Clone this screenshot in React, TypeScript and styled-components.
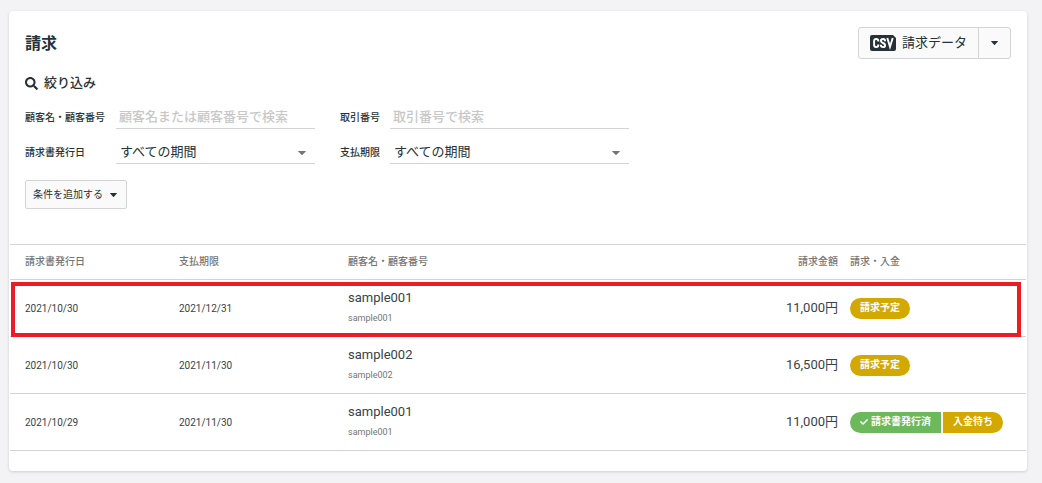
import React from "react";
import styled, { createGlobalStyle, css } from "styled-components";
import { FaSearch, FaCheck } from "react-icons/fa";

const line = "#d3d5d5";
const ink = "#263238";

const GlobalStyle = createGlobalStyle`
  *, *::before, *::after { box-sizing: border-box; }
  body {
    margin: 0;
    background: #f3f3f5;
    color: ${ink};
    font-family: Roboto, "Noto Sans CJK JP", sans-serif;
    font-size: 13px;
    line-height: 20px;
  }
  button, input, select { font: inherit; color: inherit; }
`;

const Page = styled.div`
  padding: 11px 15px 12px 9px;
`;

const Card = styled.main`
  padding: 0 1px 20px;
  background: #fff;
  border-radius: 4px;
  box-shadow: 0 1px 3px rgba(0, 0, 0, 0.16);
`;

const Header = styled.header`
  display: flex;
  align-items: center;
  justify-content: space-between;
  padding: 16px 15px 0;
`;

const Title = styled.h1`
  margin: 0;
  padding-top: 2px;
  font-size: 16px;
  line-height: 24px;
  font-weight: 700;
`;

const ButtonGroup = styled.div`
  display: flex;
  height: 32px;
  border: 1px solid ${line};
  border-radius: 3px;
  background: #fafafa;
`;

const GroupButton = styled.button<{ $split?: boolean }>`
  display: flex;
  align-items: center;
  justify-content: center;
  gap: 6px;
  padding: 0 ${(p) => (p.$split ? 12 : 11)}px;
  border: 0;
  border-left: ${(p) => (p.$split ? `1px solid ${line}` : "0")};
  background: transparent;
`;

const CsvMark = styled.svg`
  display: block;
  width: 26px;
  height: 16px;
`;

const CaretSvg = styled.svg<{ $muted?: boolean }>`
  display: block;
  width: ${(p) => (p.$muted ? 8 : 7)}px;
  height: 4px;
  fill: ${(p) => (p.$muted ? "#757575" : ink)};
`;

const Caret = ({ muted, className }: { muted?: boolean; className?: string }) => (
  <CaretSvg className={className} $muted={muted} viewBox="0 0 8 4" preserveAspectRatio="none" aria-hidden="true">
    <path d="M0.5 0H7.5Q8.2 0 7.8 0.5L4.5 3.7Q4 4.1 3.5 3.7L0.2 0.5Q-0.2 0 0.5 0Z" />
  </CaretSvg>
);

const Filters = styled.section`
  padding: 14px 15px 35px;
`;

const FilterTitle = styled.h2`
  display: flex;
  align-items: center;
  gap: 6px;
  margin: 0 0 12px;
  font-size: 13px;
  line-height: 20px;
  font-weight: 500;
`;

const FilterGrid = styled.div`
  display: grid;
  grid-template-columns: minmax(0, 290px) minmax(0, 289px);
  gap: 11px 25px;
  margin-bottom: 16px;
`;

const FilterPair = styled.div<{ $narrow?: boolean }>`
  display: grid;
  grid-template-columns: ${(p) => (p.$narrow ? 50 : 91)}px minmax(0, 1fr);
  align-items: center;
  height: 24px;
`;

const Label = styled.label`
  padding-top: 2px;
  font-size: 10px;
  line-height: 16px;
  font-weight: 500;
  white-space: nowrap;
`;

const control = css`
  width: 100%;
  height: 24px;
  margin: 0;
  padding: 0 4px;
  border: 0;
  border-bottom: 1px solid ${line};
  border-radius: 0;
  background: transparent;
  outline: none;
`;

const TextInput = styled.input`
  ${control}
  padding: 0 3px;
  &::placeholder { color: #c8c8c8; opacity: 1; font-weight: 500; }
`;

const SelectBox = styled.div`
  position: relative;
`;

const Select = styled.select`
  ${control}
  display: block;
  appearance: none;
`;

const SelectCaret = styled(Caret)`
  position: absolute;
  right: 9px;
  top: 11px;
  pointer-events: none;
`;

const AddButton = styled.button`
  display: flex;
  align-items: center;
  gap: 7px;
  height: 29px;
  padding: 0 9px 0 7px;
  border: 1px solid ${line};
  border-radius: 2px;
  background: #fafafa;
  font-size: 10px;
`;

const Table = styled.table`
  width: 100%;
  border-collapse: separate;
  border-spacing: 0;
  border-top: 1px solid ${line};
  table-layout: fixed;
`;

const DateCol = styled.col`
  width: 163px;
`;
const DueCol = styled.col`
  width: 169px;
`;
const AmountCol = styled.col`
  width: 130px;
`;
const StatusCol = styled.col`
  width: 182px;
`;

const cell = css<{ $right?: boolean }>`
  padding: 0 6px;
  border-bottom: 1px solid ${line};
  text-align: ${(p) => (p.$right ? "right" : "left")};
  &:first-child { padding-left: 15px; }
`;

const Th = styled.th<{ $right?: boolean }>`
  ${cell}
  height: 35px;
  color: #757575;
  font-size: 10px;
  font-weight: 500;
`;

const Td = styled.td<{ $right?: boolean; $small?: boolean }>`
  ${cell}
  height: 57px;
  padding-top: ${(p) => (p.$small ? 2 : 0)}px;
  color: #37424a;
  font-size: ${(p) => (p.$small ? 10 : 13)}px;
`;

const Row = styled.tr`
  position: relative;
`;

const RowMark = styled.span`
  position: absolute;
  inset: 2px 5px 0 1px;
  border: 4px solid #ed1c24;
  pointer-events: none;
`;

const Customer = styled.div`
  line-height: 20px;
`;

const CustomerCode = styled.div`
  color: #757575;
  font-size: 9px;
  line-height: 20px;
`;

const Badges = styled.div`
  display: flex;
  gap: 2px;
`;

const Badge = styled.span<{ $done?: boolean }>`
  display: flex;
  align-items: center;
  gap: 3px;
  height: 21px;
  padding: 0 10px;
  background: ${(p) => (p.$done ? "#6bb95b" : "#d3a900")};
  color: #fff;
  font-size: 10px;
  font-weight: 700;
  white-space: nowrap;

  &:first-child {
    border-top-left-radius: 11px;
    border-bottom-left-radius: 11px;
  }
  &:last-child {
    border-top-right-radius: 11px;
    border-bottom-right-radius: 11px;
  }
`;

interface Status {
  text: string;
  done?: boolean;
}

interface Bill {
  issued: string;
  due: string;
  customer: string;
  amount: string;
  status: Status[];
  marked?: boolean;
}

const bills: Bill[] = [
  { issued: "2021/10/30", due: "2021/12/31", customer: "sample001", amount: "11,000円", status: [{ text: "請求予定" }], marked: true },
  { issued: "2021/10/30", due: "2021/11/30", customer: "sample002", amount: "16,500円", status: [{ text: "請求予定" }] },
  {
    issued: "2021/10/29",
    due: "2021/11/30",
    customer: "sample001",
    amount: "11,000円",
    status: [{ text: "請求書発行済", done: true }, { text: "入金待ち" }],
  },
];

const PeriodSelect = ({ id }: { id: string }) => (
  <SelectBox>
    <Select id={id}>
      <option>すべての期間</option>
    </Select>
    <SelectCaret muted />
  </SelectBox>
);

export default function App() {
  return (
    <Page lang="ja">
      <GlobalStyle />
      <Card>
        <Header>
          <Title>請求</Title>
          <ButtonGroup>
            <GroupButton type="button">
              <CsvMark viewBox="0 0 26 16" aria-hidden="true">
                <path d="M2 0H23L26 3V14Q26 16 24 16H2Q0 16 0 14V2Q0 0 2 0Z" fill={ink} />
                <g fill="none" stroke="#fff" strokeWidth="1.9">
                  <path d="M8.3 6.5V6Q8.3 4 6.2 4T4.1 6V10.1Q4.1 12.1 6.2 12.1T8.3 10.1V9.6" />
                  <path d="M15.1 6.2Q15.1 4 13 4T10.9 5.8C10.9 8.5 15.1 7.5 15.1 10.2Q15.1 12.1 13 12.1T10.8 9.8" />
                  <path d="M17.3 3L20 11.8L22.7 3" />
                </g>
              </CsvMark>
              請求データ
            </GroupButton>
            <GroupButton type="button" $split aria-label="その他の出力">
              <Caret />
            </GroupButton>
          </ButtonGroup>
        </Header>

        <Filters>
          <FilterTitle>
            <FaSearch size={13} aria-hidden="true" />
            絞り込み
          </FilterTitle>
          <FilterGrid>
            <FilterPair>
              <Label htmlFor="customer">顧客名・顧客番号</Label>
              <TextInput id="customer" placeholder="顧客名または顧客番号で検索" />
            </FilterPair>
            <FilterPair $narrow>
              <Label htmlFor="deal">取引番号</Label>
              <TextInput id="deal" placeholder="取引番号で検索" />
            </FilterPair>
            <FilterPair>
              <Label htmlFor="issued">請求書発行日</Label>
              <PeriodSelect id="issued" />
            </FilterPair>
            <FilterPair $narrow>
              <Label htmlFor="due">支払期限</Label>
              <PeriodSelect id="due" />
            </FilterPair>
          </FilterGrid>
          <AddButton type="button">
            条件を追加する
            <Caret />
          </AddButton>
        </Filters>

        <Table>
          <colgroup>
            <DateCol />
            <DueCol />
            <col />
            <AmountCol />
            <StatusCol />
          </colgroup>
          <thead>
            <tr>
              <Th>請求書発行日</Th>
              <Th>支払期限</Th>
              <Th>顧客名・顧客番号</Th>
              <Th $right>請求金額</Th>
              <Th>請求・入金</Th>
            </tr>
          </thead>
          <tbody>
            {bills.map((bill, i) => (
              <Row key={i}>
                <Td $small>
                  {bill.issued}
                  {bill.marked && <RowMark />}
                </Td>
                <Td $small>{bill.due}</Td>
                <Td>
                  <Customer>{bill.customer}</Customer>
                  <CustomerCode>{bill.customer}</CustomerCode>
                </Td>
                <Td $right>{bill.amount}</Td>
                <Td>
                  <Badges>
                    {bill.status.map((s) => (
                      <Badge key={s.text} $done={s.done}>
                        {s.done && <FaCheck size={8} aria-hidden="true" />}
                        {s.text}
                      </Badge>
                    ))}
                  </Badges>
                </Td>
              </Row>
            ))}
          </tbody>
        </Table>
      </Card>
    </Page>
  );
}
